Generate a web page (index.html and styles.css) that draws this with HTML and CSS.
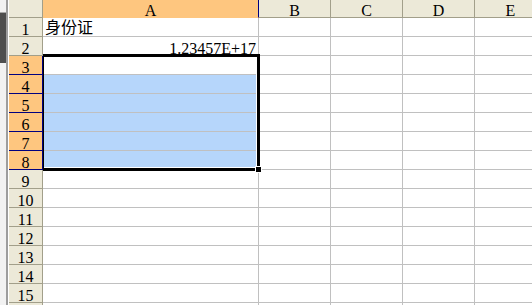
FILE: index.html
```html
<!DOCTYPE html>
<html lang="zh">
<head>
    <meta charset="UTF-8">
    <title>Sheet1</title>
    <link rel="stylesheet" href="styles.css">
</head>
<body>
    <div class="window">
        <div class="frame">
            <div class="frame-top"></div>
            <div class="frame-dark"></div>
        </div>

        <div class="sheet">
            <div class="grid">
                <!-- 列标题 -->
                <div class="corner"></div>
                <div class="col-head active">A</div>
                <div class="col-head">B</div>
                <div class="col-head">C</div>
                <div class="col-head">D</div>
                <div class="col-head">E</div>

                <div class="row-head">1</div>
                <div class="cell cjk">身份证</div>
                <div class="cell"></div><div class="cell"></div><div class="cell"></div><div class="cell"></div>

                <div class="row-head">2</div>
                <div class="cell num">1.23457E+17</div>
                <div class="cell"></div><div class="cell"></div><div class="cell"></div><div class="cell"></div>

                <div class="row-head active">3</div>
                <div class="cell"></div>
                <div class="cell"></div><div class="cell"></div><div class="cell"></div><div class="cell"></div>

                <div class="row-head active">4</div>
                <div class="cell picked"></div>
                <div class="cell"></div><div class="cell"></div><div class="cell"></div><div class="cell"></div>

                <div class="row-head active">5</div>
                <div class="cell picked"></div>
                <div class="cell"></div><div class="cell"></div><div class="cell"></div><div class="cell"></div>

                <div class="row-head active">6</div>
                <div class="cell picked"></div>
                <div class="cell"></div><div class="cell"></div><div class="cell"></div><div class="cell"></div>

                <div class="row-head active">7</div>
                <div class="cell picked"></div>
                <div class="cell"></div><div class="cell"></div><div class="cell"></div><div class="cell"></div>

                <div class="row-head active">8</div>
                <div class="cell picked"></div>
                <div class="cell"></div><div class="cell"></div><div class="cell"></div><div class="cell"></div>

                <div class="row-head">9</div>
                <div class="cell"></div><div class="cell"></div><div class="cell"></div><div class="cell"></div><div class="cell"></div>

                <div class="row-head">10</div>
                <div class="cell"></div><div class="cell"></div><div class="cell"></div><div class="cell"></div><div class="cell"></div>

                <div class="row-head">11</div>
                <div class="cell"></div><div class="cell"></div><div class="cell"></div><div class="cell"></div><div class="cell"></div>

                <div class="row-head">12</div>
                <div class="cell"></div><div class="cell"></div><div class="cell"></div><div class="cell"></div><div class="cell"></div>

                <div class="row-head">13</div>
                <div class="cell"></div><div class="cell"></div><div class="cell"></div><div class="cell"></div><div class="cell"></div>

                <div class="row-head">14</div>
                <div class="cell"></div><div class="cell"></div><div class="cell"></div><div class="cell"></div><div class="cell"></div>

                <div class="row-head">15</div>
                <div class="cell"></div><div class="cell"></div><div class="cell"></div><div class="cell"></div><div class="cell"></div>

                <!-- 第16行只露出顶边 -->
                <div class="row-head"></div>
                <div class="cell"></div><div class="cell"></div><div class="cell"></div><div class="cell"></div><div class="cell"></div>
            </div>

            <!-- 选区边框 A3:A8 -->
            <div class="selection">
                <span class="fill-handle"></span>
            </div>
        </div>
    </div>
</body>
</html>
```

FILE: styles.css
```css
* {
    box-sizing: border-box;
    margin: 0;
    padding: 0;
}

body {
    width: 532px;
    height: 305px;
    overflow: hidden;
    background: #ffffff;
    font-family: 'Liberation Serif', 'Noto Sans CJK SC', serif;
    font-size: 16px;
    color: #000000;
}

.window {
    display: flex;
    height: 305px;
    overflow: hidden;
}

.frame {
    flex: none;
    width: 8px;
    margin-right: 1px;
    background: #f2f2f2;
    border-right: 2px solid #9d9d9d;
}

.frame-top {
    height: 13px;
    border-bottom: 1px solid #a8a8a8;
}

.frame-dark {
    height: 50px;
    background: #4e4e4e;
}

.sheet {
    position: relative;
    flex: none;
    height: 305px;
    overflow: hidden;
}

.grid {
    display: grid;
    grid-template-columns: 34px 216px 72px 72px 72px 72px;
    grid-template-rows: 18px;
    grid-auto-rows: 19px;
}

.corner,
.col-head,
.row-head,
.cell {
    display: flex;
    align-items: flex-end;
    line-height: 13px;
    white-space: nowrap;
}

.corner,
.col-head,
.row-head {
    justify-content: center;
    background: #ece9d8;
    border-right: 1px solid #a29f8a;
    border-bottom: 1px solid #a29f8a;
}

.col-head.active {
    background: #fec67f;
    border-right-color: #000080;
    border-bottom-color: #fec67f;
}

.row-head.active {
    background: #fec67f;
    border-right-color: #000080;
    border-bottom-color: #000080;
}

.cell {
    border-right: 1px solid #c0c0c0;
    border-bottom: 1px solid #c0c0c0;
}

.cell.picked {
    background: #b6d6fb;
}

.cjk {
    font-family: 'Noto Sans CJK SC', sans-serif;
    line-height: 19px;
    padding-left: 2px;
}

.num {
    justify-content: flex-end;
    padding-right: 2px;
}

.selection {
    position: absolute;
    left: 34px;
    top: 54px;
    width: 217px;
    height: 117px;
    border: 3px solid #000000;
    border-left-width: 1px;
    box-shadow: inset -1px 0 0 #ffffff, inset 0 1px 0 #ffffff, inset 0 -1px 0 #ffffff;
}

.fill-handle {
    position: absolute;
    left: 211px;
    top: 109px;
    width: 7px;
    height: 7px;
    background: #000000;
    border: 1px solid #ffffff;
}
```
